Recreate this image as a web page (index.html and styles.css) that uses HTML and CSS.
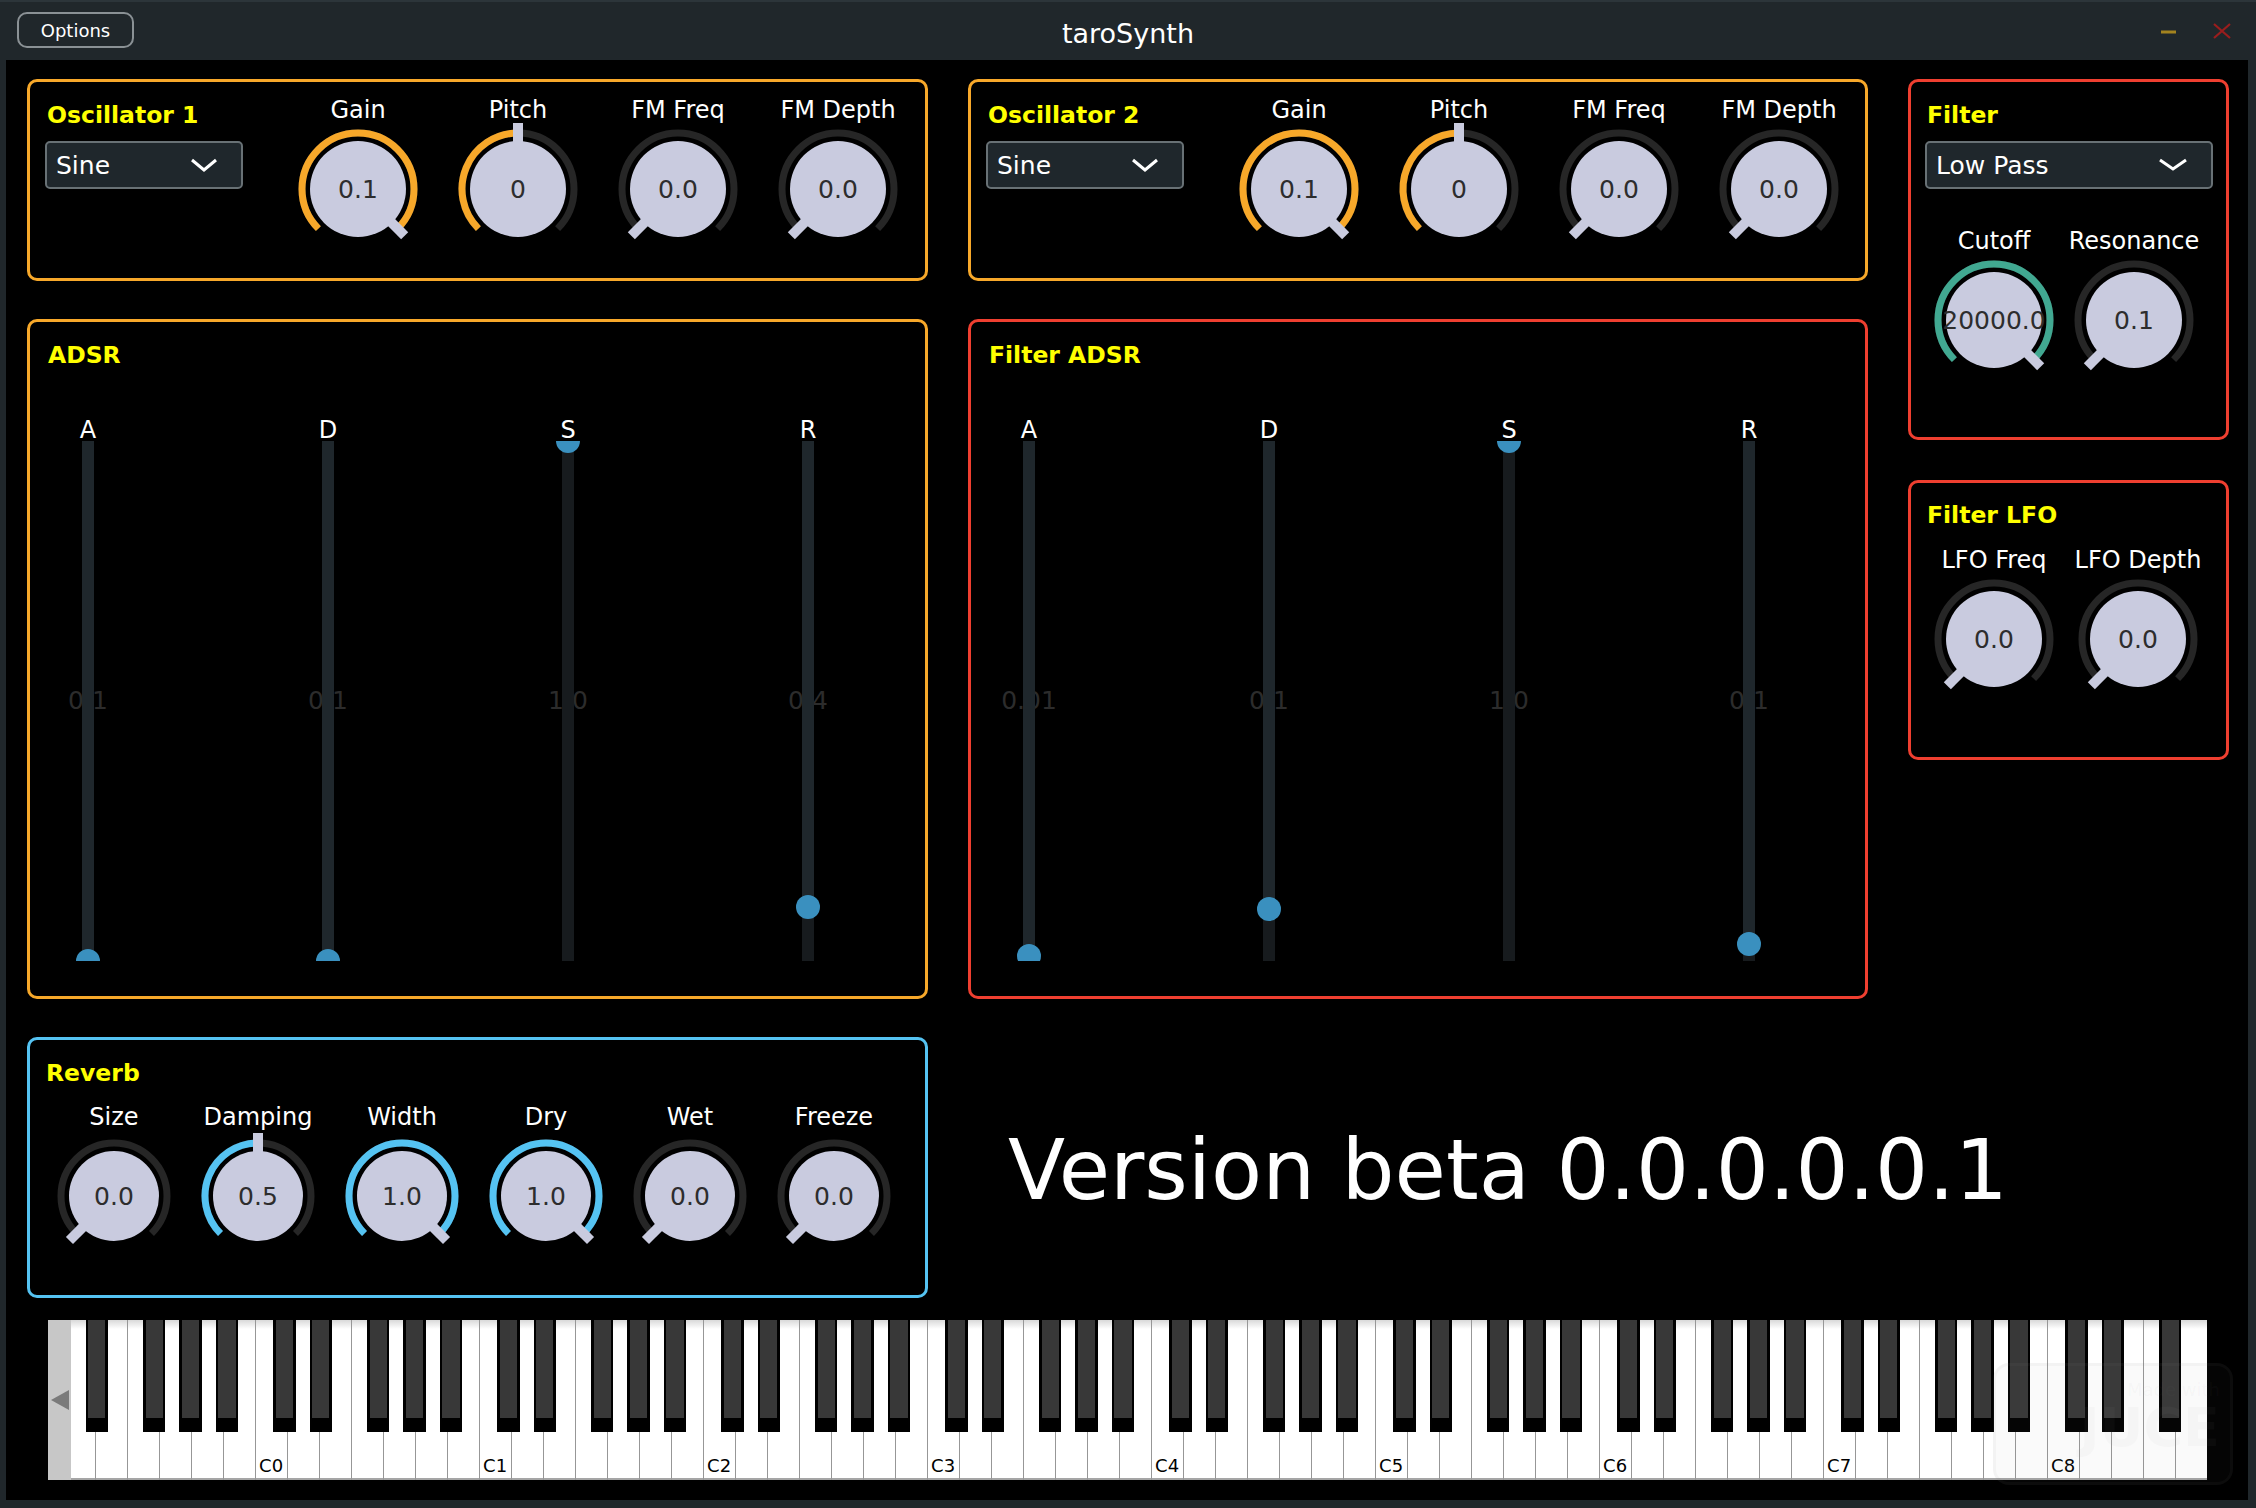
FILE: index.html
```html
<!DOCTYPE html>
<html lang="en">
<head>
<meta charset="utf-8">
<title>taroSynth</title>
<link rel="stylesheet" href="styles.css">
</head>
<body>
<div class="window">
  <header class="titlebar">
    <div class="tb-left"><div class="options-btn">Options</div></div>
    <div class="tb-title">taroSynth</div>
    <div class="tb-right">
      <svg class="win-min" width="15" height="4" viewBox="0 0 15 4"><rect x="0" y="0.5" width="15" height="3" fill="#a3831f"/></svg>
      <svg class="win-close" width="20" height="16" viewBox="0 0 20 16"><path d="M2 1 L18 15 M18 1 L2 15" stroke="#9b1d1d" stroke-width="2.2" fill="none"/></svg>
    </div>
  </header>

  <main class="content">
    <div class="columns">
      <div class="col col-left">
        <section class="panel panel-orange osc">
          <div class="osc-left">
            <h2 class="panel-title">Oscillator 1</h2>
            <div class="dropdown"><span>Sine</span><svg class="chev" width="28" height="14" viewBox="0 0 28 14"><polyline points="2,2 14,12 26,2" fill="none" stroke="#fff" stroke-width="3"/></svg></div>
          </div>
          <div class="knob-row osc-knobs">
            <div class="knob"><div class="knob-label">Gain</div><div class="knob-dial" data-v="1" data-t="0.1" data-c="#f7a82a"></div></div>
            <div class="knob"><div class="knob-label">Pitch</div><div class="knob-dial" data-v="0.5" data-t="0" data-c="#f7a82a"></div></div>
            <div class="knob"><div class="knob-label">FM Freq</div><div class="knob-dial" data-v="0" data-t="0.0"></div></div>
            <div class="knob"><div class="knob-label">FM Depth</div><div class="knob-dial" data-v="0" data-t="0.0"></div></div>
          </div>
        </section>

        <section class="panel panel-orange adsr">
          <h2 class="panel-title">ADSR</h2>
          <div class="slider-row">
            <div class="slider"><div class="slider-label">A</div><div class="rail" style="--p:0"><span class="rail-value">0.1</span><div class="track"><div class="track-fill"></div></div><div class="thumb-clip"><div class="thumb"></div></div></div></div>
            <div class="slider"><div class="slider-label">D</div><div class="rail" style="--p:0"><span class="rail-value">0.1</span><div class="track"><div class="track-fill"></div></div><div class="thumb-clip"><div class="thumb"></div></div></div></div>
            <div class="slider"><div class="slider-label">S</div><div class="rail" style="--p:1"><span class="rail-value">1.0</span><div class="track"><div class="track-fill"></div></div><div class="thumb-clip"><div class="thumb"></div></div></div></div>
            <div class="slider"><div class="slider-label">R</div><div class="rail" style="--p:0.104"><span class="rail-value">0.4</span><div class="track"><div class="track-fill"></div></div><div class="thumb-clip"><div class="thumb"></div></div></div></div>
          </div>
        </section>

        <section class="panel panel-blue reverb">
          <h2 class="panel-title">Reverb</h2>
          <div class="knob-row reverb-knobs">
            <div class="knob knob-sm"><div class="knob-label">Size</div><div class="knob-dial small" data-v="0" data-t="0.0"></div></div>
            <div class="knob knob-sm"><div class="knob-label">Damping</div><div class="knob-dial small" data-v="0.5" data-t="0.5" data-c="#55c3f2"></div></div>
            <div class="knob knob-sm"><div class="knob-label">Width</div><div class="knob-dial small" data-v="1" data-t="1.0" data-c="#55c3f2"></div></div>
            <div class="knob knob-sm"><div class="knob-label">Dry</div><div class="knob-dial small" data-v="1" data-t="1.0" data-c="#55c3f2"></div></div>
            <div class="knob knob-sm"><div class="knob-label">Wet</div><div class="knob-dial small" data-v="0" data-t="0.0"></div></div>
            <div class="knob knob-sm"><div class="knob-label">Freeze</div><div class="knob-dial small" data-v="0" data-t="0.0"></div></div>
          </div>
        </section>
      </div>

      <div class="col col-mid">
        <section class="panel panel-orange osc">
          <div class="osc-left">
            <h2 class="panel-title">Oscillator 2</h2>
            <div class="dropdown"><span>Sine</span><svg class="chev" width="28" height="14" viewBox="0 0 28 14"><polyline points="2,2 14,12 26,2" fill="none" stroke="#fff" stroke-width="3"/></svg></div>
          </div>
          <div class="knob-row osc-knobs">
            <div class="knob"><div class="knob-label">Gain</div><div class="knob-dial" data-v="1" data-t="0.1" data-c="#f7a82a"></div></div>
            <div class="knob"><div class="knob-label">Pitch</div><div class="knob-dial" data-v="0.5" data-t="0" data-c="#f7a82a"></div></div>
            <div class="knob"><div class="knob-label">FM Freq</div><div class="knob-dial" data-v="0" data-t="0.0"></div></div>
            <div class="knob"><div class="knob-label">FM Depth</div><div class="knob-dial" data-v="0" data-t="0.0"></div></div>
          </div>
        </section>

        <section class="panel panel-red adsr">
          <h2 class="panel-title">Filter ADSR</h2>
          <div class="slider-row">
            <div class="slider"><div class="slider-label">A</div><div class="rail" style="--p:0.0096"><span class="rail-value">0.01</span><div class="track"><div class="track-fill"></div></div><div class="thumb-clip"><div class="thumb"></div></div></div></div>
            <div class="slider"><div class="slider-label">D</div><div class="rail" style="--p:0.1"><span class="rail-value">0.1</span><div class="track"><div class="track-fill"></div></div><div class="thumb-clip"><div class="thumb"></div></div></div></div>
            <div class="slider"><div class="slider-label">S</div><div class="rail" style="--p:1"><span class="rail-value">1.0</span><div class="track"><div class="track-fill"></div></div><div class="thumb-clip"><div class="thumb"></div></div></div></div>
            <div class="slider"><div class="slider-label">R</div><div class="rail" style="--p:0.0327"><span class="rail-value">0.1</span><div class="track"><div class="track-fill"></div></div><div class="thumb-clip"><div class="thumb"></div></div></div></div>
          </div>
        </section>

        <div class="version">Version beta 0.0.0.0.0.1</div>
      </div>

      <div class="col col-right">
        <section class="panel panel-red filter">
          <h2 class="panel-title">Filter</h2>
          <div class="dropdown"><span>Low Pass</span><svg class="chev" width="30" height="14" viewBox="0 0 30 14"><polyline points="2,2 15,11 28,2" fill="none" stroke="#fff" stroke-width="3"/></svg></div>
          <div class="knob-row filter-knobs">
            <div class="knob knob-f"><div class="knob-label">Cutoff</div><div class="knob-dial" data-v="1" data-t="20000.0" data-c="#41a891"></div></div>
            <div class="knob knob-f"><div class="knob-label">Resonance</div><div class="knob-dial" data-v="0" data-t="0.1"></div></div>
          </div>
        </section>

        <section class="panel panel-red lfo">
          <h2 class="panel-title">Filter LFO</h2>
          <div class="knob-row lfo-knobs">
            <div class="knob knob-l"><div class="knob-label">LFO Freq</div><div class="knob-dial" data-v="0" data-t="0.0"></div></div>
            <div class="knob knob-l"><div class="knob-label">LFO Depth</div><div class="knob-dial" data-v="0" data-t="0.0"></div></div>
          </div>
        </section>
      </div>
    </div>

    <div class="keyboard">
      <div class="kb-scroll"></div>
      <div class="kb-keys"><div class="kb-inner"></div></div>
    </div>
  </main>

  <div class="juce-mark"><span class="jm-small">Made with</span><span class="jm-big">JUCE</span></div>
</div>
<script src="app.js"></script>
</body>
</html>
```

FILE: styles.css
```css
* { box-sizing: border-box; }
html, body { margin: 0; padding: 0; }
body {
  width: 2256px;
  height: 1508px;
  overflow: hidden;
  background: #20272b;
  font-family: "DejaVu Sans", "Liberation Sans", sans-serif;
  color: #fff;
}
.window { position: relative; width: 2256px; height: 1508px; }

/* title bar */
.titlebar {
  height: 60px;
  border-top: 2px solid #2c353a;
  display: grid;
  grid-template-columns: 1fr auto 1fr;
  align-items: center;
}
.options-btn {
  margin-left: 17px;
  width: 117px;
  height: 36px;
  border: 2px solid #8a9195;
  border-radius: 10px;
  display: flex;
  align-items: center;
  justify-content: center;
  font-size: 18px;
  color: #fff;
  margin-bottom: 2px;
}
.tb-title { font-size: 27px; color: #fff; margin-top: 4px; }
.tb-right {
  justify-self: end;
  display: flex;
  align-items: center;
  gap: 36px;
  margin-right: 24px;
}
.win-min { margin-top: 1px; }

/* content */
.content {
  margin: 0 8px 8px 6px;
  height: 1440px;
  background: #000;
  padding: 19px 0 0 21px;
}
.columns { display: flex; gap: 40px; }
.col { display: flex; flex-direction: column; }
.col-left { width: 901px; }
.col-mid { width: 900px; }
.col-right { width: 321px; }

.panel { border: 3px solid; border-radius: 10px; }
.panel-orange { border-color: #f7a82a; }
.panel-red { border-color: #ef3f30; }
.panel-blue { border-color: #55c3f2; }

.panel-title {
  margin: 0;
  font-size: 23.5px;
  line-height: 28px;
  font-weight: bold;
  color: #ffff00;
}

/* oscillator */
.osc { height: 202px; display: flex; padding: 14px 0 0 15px; }
.osc-left { width: 198px; }
.osc-left .panel-title { margin: 5px 0 0 2px; }
.dropdown {
  margin-top: 12px;
  height: 48px;
  background: #1f272c;
  border: 2px solid #687175;
  border-radius: 5px;
  display: flex;
  align-items: center;
  justify-content: space-between;
  padding: 0 23px 0 9px;
  font-size: 25px;
  color: #fff;
}
.knob-row { display: flex; }
.osc-knobs { margin-left: 35px; }
.knob { width: 160px; display: flex; flex-direction: column; align-items: center; }
.knob-sm { width: 144px; }
.knob-f { width: 140px; }
.knob-l { width: 144px; }
.knob-label { font-size: 24px; line-height: 28px; color: #fff; white-space: nowrap; }
.knob-dial { width: 140px; height: 130px; }
.knob-dial svg { overflow: visible; display: block; }
.knob-text { font-family: "DejaVu Sans", sans-serif; font-size: 25px; fill: #2d2d2d; }

/* adsr */
.col-left .panel + .panel, .col-mid .panel + .panel { margin-top: 38px; }
.adsr { height: 680px; padding: 19px 0 0 18px; }
.slider-row { display: flex; gap: 160px; margin-top: 50px; }
.slider { width: 80px; display: flex; flex-direction: column; align-items: center; }
.slider-label { font-size: 24px; line-height: 22px; height: 22px; color: #fff; }
.rail {
  position: relative;
  width: 80px;
  height: 520px;
  display: flex;
  justify-content: center;
}
.rail-value {
  position: absolute;
  left: 0; right: 0;
  top: 50%;
  transform: translateY(-50%);
  text-align: center;
  font-size: 25px;
  line-height: 30px;
  color: #2c2c2c;
  white-space: nowrap;
}
.track { position: relative; width: 12px; height: 100%; background: #1f272c; z-index: 1; }
.track-fill { position: absolute; left: 0; right: 0; bottom: 0; height: calc(var(--p) * 100%); background: #171b1e; }
.thumb-clip { position: absolute; left: 28px; width: 24px; top: 0; bottom: 0; overflow: hidden; z-index: 2; }
.thumb {
  position: absolute;
  left: 0;
  width: 24px;
  height: 24px;
  border-radius: 50%;
  background: #3a90bf;
  bottom: calc(var(--p) * 520px - 12px);
}

/* reverb */
.reverb { height: 261px; margin-top: 40px; padding: 19px 0 0 18px; }
.col-left .reverb { margin-top: 40px; }
.reverb .panel-title { margin-left: -2px; }
.reverb-knobs { margin: 16px 0 0 -6px; }

/* version */
.version {
  margin-top: 40px;
  height: 261px;
  display: flex;
  align-items: center;
  padding-left: 40px;
  font-size: 83.5px;
  white-space: nowrap;
  color: #fff;
}

/* filter */
.filter { height: 361px; padding: 19px 13px 0 14px; }
.filter .panel-title { margin-left: 2px; }
.filter-knobs { margin: 38px 0 0 -1px; }
.lfo { height: 280px; margin-top: 40px; padding: 18px 13px 0 14px; }
.lfo .panel-title { margin-left: 2px; }
.lfo-knobs { margin: 17px 0 0 -3px; }

/* keyboard */
.keyboard {
  margin: 20px 0 0 21px;
  width: 2159px;
  height: 160px;
  display: flex;
}
.kb-scroll {
  width: 23px;
  background: #c7c7c7;
  display: flex;
  align-items: center;
  justify-content: center;
}
.kb-scroll::before {
  content: "";
  border-right: 18px solid #7a7a7a;
  border-top: 10px solid transparent;
  border-bottom: 10px solid transparent;
}
.kb-keys { flex: 1; overflow: hidden; position: relative; }
.kb-inner { position: relative; margin-left: -8.4px; height: 100%; display: flex; }
.wkey {
  flex: 0 0 32px;
  height: 100%;
  border-left: 1px solid #979797;
  background: linear-gradient(to bottom, #d9d9d9 0, #ffffff 9px);
  box-shadow: inset 0 -2px 0 #a5a5a5;
  display: flex;
  align-items: flex-end;
  justify-content: center;
  padding-bottom: 5px;
}
.wkey-label { font-size: 18px; line-height: 18px; color: #000; }
.bkey {
  position: absolute;
  top: 0;
  width: 22.4px;
  height: 112px;
  background: #000;
}
.bkey::before {
  content: "";
  position: absolute;
  left: 2.6px;
  right: 2.6px;
  top: 0;
  height: 98px;
  background: #383838;
}

/* JUCE watermark overlay */
.juce-mark {
  position: absolute;
  left: 1993px;
  top: 1363px;
  width: 240px;
  height: 122px;
  border: 3px solid rgba(140, 140, 140, 0.06);
  border-radius: 16px;
  background: rgba(128, 128, 128, 0.04);
  display: flex;
  flex-direction: column;
  align-items: flex-end;
  padding: 14px 10px 0 0;
  color: rgba(150, 150, 150, 0.05);
  pointer-events: none;
}
.jm-small { font-size: 18px; line-height: 20px; }
.jm-big { font-size: 54px; line-height: 56px; font-weight: bold; }
```

FILE: app.js
```js
(function () {
  function pt(cx, cy, r, deg) {
    var a = deg * Math.PI / 180;
    return (cx + r * Math.sin(a)).toFixed(2) + ' ' + (cy - r * Math.cos(a)).toFixed(2);
  }
  function arc(cx, cy, r, a0, a1) {
    var large = (a1 - a0) > 180 ? 1 : 0;
    return 'M' + pt(cx, cy, r, a0) + ' A' + r + ' ' + r + ' 0 ' + large + ' 1 ' + pt(cx, cy, r, a1);
  }
  var dials = document.querySelectorAll('.knob-dial');
  for (var i = 0; i < dials.length; i++) {
    var el = dials[i];
    var v = parseFloat(el.getAttribute('data-v') || '0');
    var t = el.getAttribute('data-t') || '';
    var c = el.getAttribute('data-c') || '#f7a82a';
    var small = el.classList.contains('small');
    var br = small ? 45 : 48, ar = small ? 53 : 56, cx = 70, cy = 65;
    var end = -135 + 270 * v;
    var s = '<svg width="140" height="130" viewBox="0 0 140 130">';
    s += '<path d="' + arc(cx, cy, ar, -135, 135) + '" fill="none" stroke="#262626" stroke-width="7"/>';
    if (v > 0) s += '<path d="' + arc(cx, cy, ar, -135, end) + '" fill="none" stroke="' + c + '" stroke-width="7"/>';
    s += '<path d="M' + pt(cx, cy, br - 8, end) + ' L' + pt(cx, cy, ar + 10, end) + '" stroke="#c9cbdf" stroke-width="10"/>';
    s += '<circle cx="70" cy="65" r="' + br + '" fill="#c9cbdf"/>';
    s += '<text x="70" y="65" text-anchor="middle" dominant-baseline="central" class="knob-text">' + t + '</text></svg>';
    el.innerHTML = s;
  }

  var inner = document.querySelector('.kb-inner');
  var whites = [];
  var first = ['D', 'E', 'F', 'G', 'A', 'B'];
  var oct = ['C', 'D', 'E', 'F', 'G', 'A', 'B'];
  for (var a = 0; a < first.length; a++) whites.push([first[a], -1]);
  for (var o = 0; o <= 7; o++) for (var b = 0; b < 7; b++) whites.push([oct[b], o]);
  var last = ['C', 'D', 'E', 'F', 'G'];
  for (var d = 0; d < last.length; d++) whites.push([last[d], 8]);
  var html = '';
  for (var k = 0; k < whites.length; k++) {
    var lab = whites[k][0] === 'C' ? '<span class="wkey-label">C' + whites[k][1] + '</span>' : '';
    html += '<div class="wkey">' + lab + '</div>';
  }
  var offs = [18.56, 55.04, 112.32, 148.8, 185.28];
  for (var oc = -1; oc <= 8; oc++) {
    var xc = -32 + (oc + 1) * 224;
    for (var j = 0; j < 5; j++) {
      if (oc === -1 && j === 0) continue;
      if (oc === 8 && j > 2) continue;
      html += '<div class="bkey" style="left:' + (xc + offs[j]).toFixed(2) + 'px"></div>';
    }
  }
  inner.innerHTML = html;
})();
```
